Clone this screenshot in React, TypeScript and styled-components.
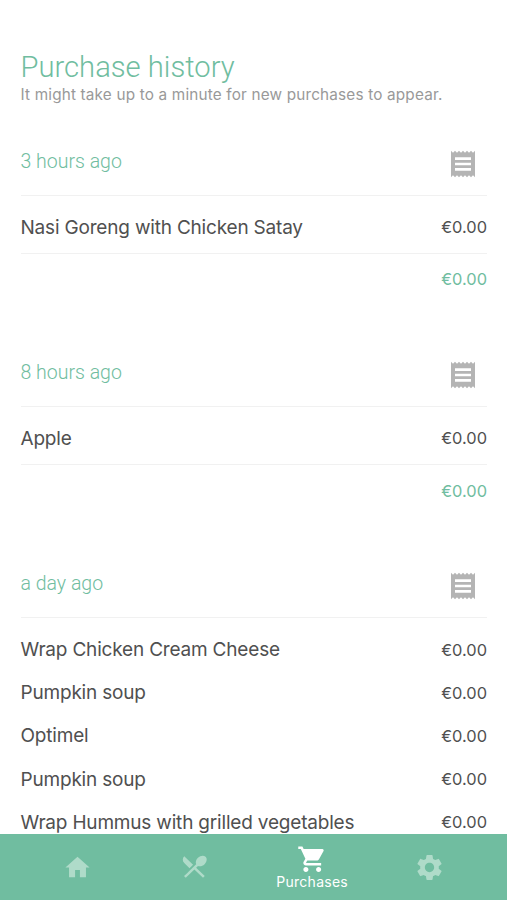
import React from "react";
import styled, { createGlobalStyle } from "styled-components";
import { MdHome, MdShoppingCart, MdSettings, MdReceipt } from "react-icons/md";
import { IoMdRestaurant } from "react-icons/io";

const Global = createGlobalStyle`
  * { box-sizing: border-box; }
  body { margin: 0; background: #fff; font-family: Inter, sans-serif; color: #505050; }
`;

const Screen = styled.div`
  height: 900px;
  display: flex;
  flex-direction: column;
  overflow: hidden;
`;
const Content = styled.main`
  flex: 1;
  min-height: 0;
  overflow: hidden;
  padding: 50px 20px 0 20.5px;
`;
const Title = styled.h1`
  margin: 0;
  font: 300 29.2px/34px Roboto, sans-serif;
  color: #70bda0;
  white-space: nowrap;
`;
const Subtitle = styled.p`
  margin: 0;
  padding-top: 1px;
  font-size: 15.3px;
  line-height: 20px;
  letter-spacing: 0.18px;
  color: #999;
  white-space: nowrap;
`;
const Purchase = styled.section`
  margin-bottom: 42.2px;
`;
const PurchaseList = styled.div`
  padding-top: 31px;
`;
const PurchaseHeader = styled.header`
  height: 59.6px;
  display: flex;
  justify-content: space-between;
  border-bottom: 1px solid #f1f1f1;
  padding: 12px 8px 0 0;
  svg { display: block; fill: #b4b4b4; }
`;
const Time = styled.h2`
  margin: 0;
  padding-top: 1px;
  font: 300 19.5px/26px Roboto, sans-serif;
  color: #70bda0;
`;
const Items = styled.div`
  padding: 10px 0 4.2px;
  border-bottom: 1px solid #f1f1f1;
`;
const Item = styled.div`
  height: 43.2px;
  display: flex;
  align-items: center;
  justify-content: space-between;
  font-size: 19px;
  letter-spacing: -0.19px;
  white-space: nowrap;
`;
const Price = styled.span<{ $total?: boolean }>`
  font-size: 16.4px;
  line-height: 20px;
  letter-spacing: 0;
  color: ${(p) => (p.$total ? "#70bda0" : "#505050")};
`;
const Total = styled.div`
  height: 51px;
  display: flex;
  align-items: center;
  justify-content: flex-end;
`;
const TabBar = styled.nav`
  height: 66px;
  flex: none;
  display: grid;
  grid-template-columns: repeat(4, 117.3px);
  justify-content: center;
  background: #70bda0;
`;
const Tab = styled.div<{ $active?: boolean }>`
  display: flex;
  flex-direction: column;
  align-items: center;
  justify-content: center;
  color: ${(p) => (p.$active ? "#fff" : "#afdbc9")};
`;
const TabLabel = styled.span`
  font-size: 14px;
  line-height: 16px;
  letter-spacing: 0.25px;
`;

const purchases = [
  { time: "3 hours ago", items: ["Nasi Goreng with Chicken Satay"] },
  { time: "8 hours ago", items: ["Apple"] },
  {
    time: "a day ago",
    items: [
      "Wrap Chicken Cream Cheese",
      "Pumpkin soup",
      "Optimel",
      "Pumpkin soup",
      "Wrap Hummus with grilled vegetables",
    ],
  },
];

export default function App() {
  return (
    <Screen>
      <Global />
      <Content>
        <Title>Purchase history</Title>
        <Subtitle>It might take up to a minute for new purchases to appear.</Subtitle>
        <PurchaseList>
          {purchases.map((p) => (
            <Purchase key={p.time}>
              <PurchaseHeader>
                <Time>{p.time}</Time>
                <MdReceipt size={32} />
              </PurchaseHeader>
              <Items>
                {p.items.map((name, i) => (
                  <Item key={i}>
                    <span>{name}</span>
                    <Price>€0.00</Price>
                  </Item>
                ))}
              </Items>
              {p.items.length === 1 && (
                <Total>
                  <Price $total>€0.00</Price>
                </Total>
              )}
            </Purchase>
          ))}
        </PurchaseList>
      </Content>
      <TabBar>
        <Tab><MdHome size={29} /></Tab>
        <Tab><IoMdRestaurant size={29.5} /></Tab>
        <Tab $active>
          <MdShoppingCart size={30.5} />
          <TabLabel>Purchases</TabLabel>
        </Tab>
        <Tab><MdSettings size={31} /></Tab>
      </TabBar>
    </Screen>
  );
}
